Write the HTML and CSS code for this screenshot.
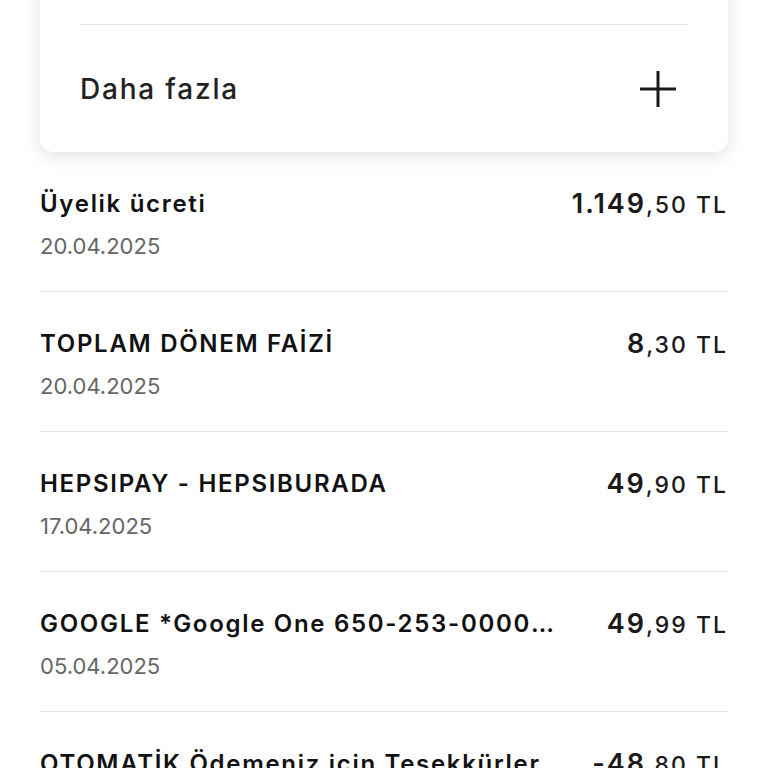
FILE: index.html
```html
<!DOCTYPE html>
<html lang="tr">
<head>
    <meta charset="UTF-8">
    <meta name="viewport" content="width=device-width, initial-scale=1.0">
    <title>Ekstre</title>
    <link rel="stylesheet" href="styles.css">
</head>
<body>
    <div class="page">
        <div class="card">
            <div class="card-top"></div>
            <div class="more-row">
                <span class="more-label">Daha fazla</span>
                <svg class="plus" width="36" height="36" viewBox="0 0 36 36">
                    <path d="M18 0V36M0 18H36" stroke="#1a1a1a" stroke-width="3" fill="none"/>
                </svg>
            </div>
        </div>

        <div class="list">
            <div class="item">
                <div class="info">
                    <div class="title">Üyelik ücreti</div>
                    <div class="date">20.04.2025</div>
                </div>
                <div class="amount"><span class="int">1.149</span><span class="dec">,50 TL</span></div>
            </div>
            <div class="item">
                <div class="info">
                    <div class="title">TOPLAM DÖNEM FAİZİ</div>
                    <div class="date">20.04.2025</div>
                </div>
                <div class="amount"><span class="int">8</span><span class="dec">,30 TL</span></div>
            </div>
            <div class="item">
                <div class="info">
                    <div class="title">HEPSIPAY - HEPSIBURADA</div>
                    <div class="date">17.04.2025</div>
                </div>
                <div class="amount"><span class="int">49</span><span class="dec">,90 TL</span></div>
            </div>
            <div class="item">
                <div class="info">
                    <div class="title">GOOGLE *Google One 650-253-0000 CA</div>
                    <div class="date">05.04.2025</div>
                </div>
                <div class="amount"><span class="int">49</span><span class="dec">,99 TL</span></div>
            </div>
            <div class="item">
                <div class="info">
                    <div class="title">OTOMATİK Ödemeniz için Teşekkürler</div>
                    <div class="date">01.04.2025</div>
                </div>
                <div class="amount"><span class="int">-48</span><span class="dec">,80 TL</span></div>
            </div>
        </div>
    </div>
</body>
</html>
```

FILE: styles.css
```css
body {
    font-family: "Inter", "Liberation Sans", sans-serif;
    background-color: #fff;
    color: #1a1a1a;
    margin: 0;
    overflow: hidden;
}
.page {
    padding: 0 40px;
}
.card {
    margin-top: -35px;
    background: white;
    border-radius: 0 0 14px 14px;
    box-shadow: 0 4px 18px rgba(0, 0, 0, 0.12);
    padding: 0 40px;
}
.card-top {
    height: 59px;
    border-bottom: 1px solid #e8e8e8;
}
.more-row {
    display: flex;
    align-items: center;
    justify-content: space-between;
    height: 127px;
}
.more-label {
    font-size: 28px;
    font-weight: 500;
    letter-spacing: 1.8px;
    color: #222;
}
.plus {
    margin-right: 12px;
}
.item {
    display: flex;
    justify-content: space-between;
    gap: 46px;
    padding: 37px 0 30px;
    border-bottom: 1px solid #e6e6e6;
}
.info {
    min-width: 0;
}
.title {
    font-size: 24px;
    line-height: 30px;
    font-weight: 600;
    letter-spacing: 1.7px;
    color: #111;
    white-space: nowrap;
    overflow: hidden;
    text-overflow: ellipsis;
}
.date {
    margin-top: 12px;
    font-size: 22px;
    line-height: 30px;
    color: #666;
}
.amount {
    flex-shrink: 0;
    line-height: 30px;
    letter-spacing: 2px;
    white-space: nowrap;
    color: #1a1a1a;
}
.int {
    font-size: 27px;
    font-weight: 600;
}
.dec {
    font-size: 23px;
    font-weight: 500;
}
```
